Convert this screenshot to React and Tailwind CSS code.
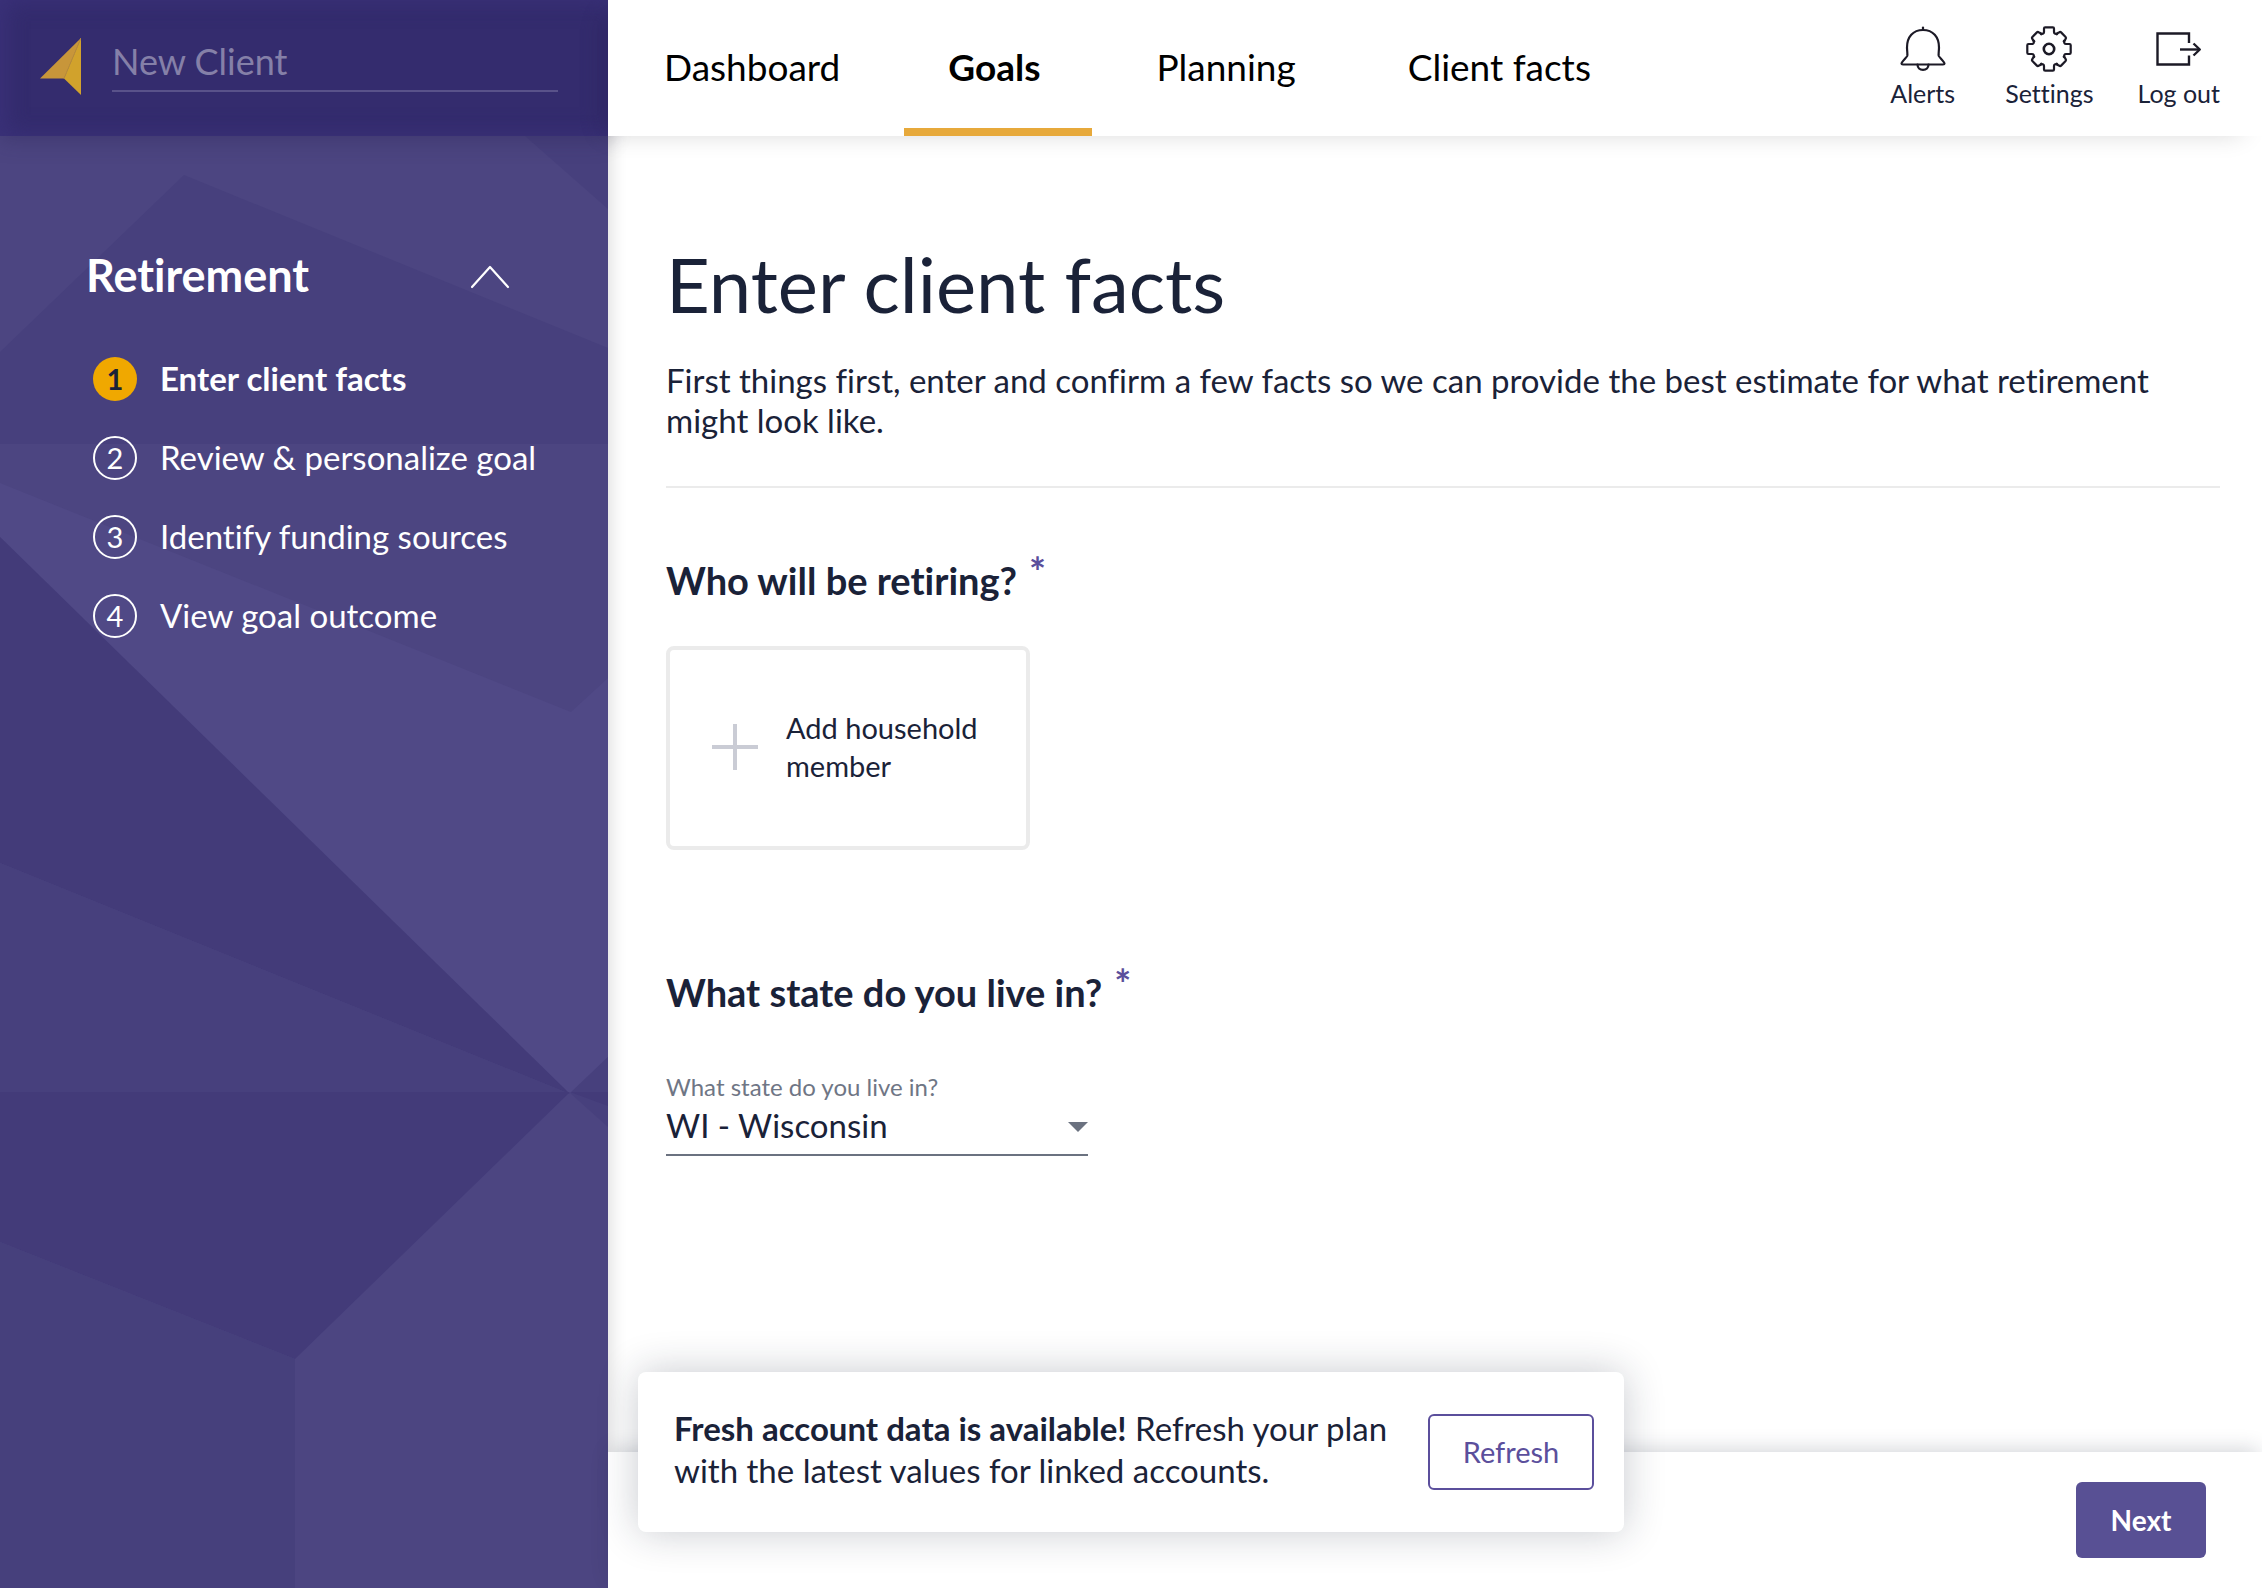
import React from "react";

const NAV = [
  { label: "Dashboard", active: false },
  { label: "Goals", active: true },
  { label: "Planning", active: false },
  { label: "Client facts", active: false },
];

const STEPS = [
  "Enter client facts",
  "Review & personalize goal",
  "Identify funding sources",
  "View goal outcome",
];

function Facets() {
  return (
    <svg
      className="absolute inset-0 h-full w-full"
      viewBox="0 0 608 1588"
      preserveAspectRatio="xMidYMin slice"
      aria-hidden="true"
    >
      <rect width="608" height="1588" fill="#4c4581" />
      <path d="M0 352 184 175 608 348V444H0Z" fill="#47407d" />
      <path d="M525 136 608 209V136Z" fill="#47407d" />
      <path d="M0 483 571 712 608 678V1057L570 1094 0 537Z" fill="#504986" />
      <path d="M0 537 570 1094 0 863Z" fill="#433b79" />
      <path d="M0 863 570 1094 0 1092Z" fill="#47407d" />
      <path d="M0 1092H570L295 1359 0 1242Z" fill="#433b79" />
      <path d="M0 1242 295 1359V1588H0Z" fill="#46407c" />
      <path d="M570 1093 608 1057V1127Z" fill="#47407d" />
      <path d="M570 1092H608V1106Z" fill="#433b79" />
    </svg>
  );
}

function Logo() {
  return (
    <svg className="h-[57px] w-[41px] shrink-0" viewBox="0 0 41 57" aria-hidden="true">
      <path d="M41 0 0 40.500H24Z" fill="#c8963a" />
      <path d="M41 0 24 40.500 41 57Z" fill="#d1a22c" />
      <path d="M41 0 24 40.500" stroke="#b98c3c" strokeWidth="1" />
    </svg>
  );
}

function BellIcon() {
  return (
    <svg className="h-12 w-12" viewBox="0 0 48 48" fill="none" stroke="#1c1a26" strokeWidth="2.2" strokeLinecap="round" strokeLinejoin="round" aria-hidden="true">
      <path d="M24 2.500V5" />
      <path d="M24 5C14 5 8 12 8 22.500c0 4 .8 6.500.2 8.500-.4 1.200-5.700 5.800-5.700 7.500 0 .6.500 1 1.500 1h40c1 0 1.500-.4 1.500-1 0-1.700-5.300-6.300-5.700-7.500-.6-2 .2-4.500.2-8.500C40 12 34 5 24 5Z" />
      <path d="M18.500 39.500c0 3.200 2.300 5.300 5.500 5.300s5.500-2.100 5.500-5.300" />
    </svg>
  );
}

function GearIcon() {
  const tooth = "M-8 -15.300Q-5 -14.800 -5 -17V-20.500Q-5 -21.700 -3.800 -21.700H3.800Q5 -21.700 5 -20.500V-17Q5 -14.800 8 -15.300";
  return (
    <svg className="h-12 w-12" viewBox="-24 -24 48 48" fill="none" stroke="#1c1a26" strokeWidth="2.200" strokeLinecap="round" strokeLinejoin="round" aria-hidden="true">
      <circle r="5.200" strokeWidth="2.600" />
      {[0, 90, 180, 270].map((a) => (
        <path key={a} d={tooth} transform={`rotate(${a})`} />
      ))}
      {[45, 135, 225, 315].map((a) => (
        <path
          key={a}
          d="M-5.200 -16.500Q-4.800 -14.800 -5 -17.500L-4.600 -18.800Q-4.400 -20.300 -3.200 -20.300H3.200Q4.400 -20.300 4.600 -18.800L5 -17.500Q4.800 -14.800 5.200 -16.500"
          transform={`rotate(${a})`}
        />
      ))}
    </svg>
  );
}

function LogoutIcon() {
  return (
    <svg className="h-12 w-12" viewBox="0 0 48 48" fill="none" stroke="#1c1a26" strokeWidth="2.400" aria-hidden="true">
      <path d="M34 18V8.500H2.500V39.500H34V30.500" />
      <path d="M25 24.500H44.500" />
      <path d="M38.500 18.500 44.800 24.500 38.500 30.500" strokeLinejoin="round" />
    </svg>
  );
}

function Sidebar() {
  return (
    <aside className="relative flex w-[608px] shrink-0 flex-col bg-[#4c4581] text-white">
      <Facets />
      <div className="relative flex h-[136px] items-start gap-[31px] bg-[#342c6e] pt-8 pr-[50px] pl-10 shadow-[inset_10px_0_24px_-8px_#3a3178,inset_0_0_24px_#3a3178,0_4px_20px_rgba(40,34,80,0.35)]">
        <div className="pt-1.5">
          <Logo />
        </div>
        <input
          aria-label="Client name"
          placeholder="New Client"
          className="h-[60px] min-w-0 flex-1 border-b-2 border-[#59528a] bg-transparent text-4xl placeholder-[#8580a8] outline-none"
        />
      </div>
      <section className="relative px-[86px] pt-[111px]">
        <button type="button" className="flex w-full items-center justify-between text-left">
          <h2 className="text-[45px] leading-[56px] font-bold">Retirement</h2>
          <svg className="mt-1 mr-3 h-6 w-10" viewBox="0 0 40 24" fill="none" stroke="white" strokeWidth="2.200" strokeLinecap="round" strokeLinejoin="round" aria-hidden="true">
            <path d="M2 22 20 2 38 22" />
          </svg>
        </button>
      </section>
      <ol className="relative flex flex-col gap-[35px] pt-[54px] pr-8 pl-[93px]">
        {STEPS.map((s, i) => (
          <li key={s}>
            <a href="#" className="flex items-center gap-[23px] whitespace-nowrap">
              <span
                className={
                  i === 0
                    ? "flex h-11 w-11 items-center justify-center rounded-full bg-[#f0a800] text-[29px] font-bold text-[#1a2238]"
                    : "flex h-11 w-11 items-center justify-center rounded-full border-2 border-white text-[29px]"
                }
              >
                {i + 1}
              </span>
              <span className={i === 0 ? "pb-0.5 text-[33px] leading-10 font-bold" : "pb-0.5 text-[33px] leading-10"}>{s}</span>
            </a>
          </li>
        ))}
      </ol>
    </aside>
  );
}

function Header() {
  const tools = [
    { label: "Alerts", Icon: BellIcon },
    { label: "Settings", Icon: GearIcon },
    { label: "Log out", Icon: LogoutIcon },
  ];
  return (
    <header className="relative flex h-[136px] justify-between bg-white pr-[42px] pl-2 shadow-[-12px_6px_24px_-8px_rgba(0,0,0,0.16)]">
      <nav className="flex gap-4">
        {NAV.map((n) => (
          <a
            key={n.label}
            href="#"
            className={
              n.active
                ? "flex items-center border-t-6 border-b-8 border-t-transparent border-b-[#e7a93b] pr-[52px] pl-11 text-[37px] font-bold text-black"
                : "flex items-center border-t-6 border-b-8 border-transparent px-12 text-[37px] text-black"
            }
          >
            {n.label}
          </a>
        ))}
      </nav>
      <div className="flex items-start gap-11 pt-[25px]">
        {tools.map(({ label, Icon }) => (
          <button key={label} type="button" className="flex flex-col items-center gap-1 text-[25px] leading-8 text-[#1a2238] first:mr-1.5">
            <Icon />
            {label}
          </button>
        ))}
      </div>
    </header>
  );
}

function Question({ children }) {
  return (
    <h2 className="flex items-start gap-3 text-[38px] leading-[44px] font-bold">
      {children}
      <span className="text-[40px] leading-7 text-[#5b4f9c]">*</span>
    </h2>
  );
}

export default function App() {
  return (
    <div className="flex min-h-screen bg-white font-[Lato,sans-serif] text-[#1a2238] [font-variant-ligatures:none]">
      <Sidebar />
      <div className="relative flex min-w-0 flex-1 flex-col">
        <Header />
        <main className="flex-1 pt-[108px] pr-[42px] pb-16 pl-[58px] shadow-[inset_20px_0_16px_-16px_rgba(0,0,0,0.12)]">
          <h1 className="text-[76px] leading-[80px]">Enter client facts</h1>
          <p className="mt-9 text-[33px] leading-10">
            First things first, enter and confirm a few facts so we can provide the best estimate for what retirement might look like.
          </p>
          <hr className="mt-[46px] border-t-2 border-[#ebebeb]" />

          <section className="mt-[70px]">
            <Question>Who will be retiring?</Question>
            <button
              type="button"
              className="mt-11 flex h-[204px] w-[364px] items-center gap-7 rounded-lg border-4 border-[#ebebeb] bg-white px-[42px] pb-0.5 text-left text-[29px] leading-[38px]"
            >
              <svg className="h-[46px] w-[46px] shrink-0" viewBox="0 0 46 46" stroke="#caccd5" strokeWidth="4" aria-hidden="true">
                <path d="M23 0V46M0 23H46" />
              </svg>
              Add household member
            </button>
          </section>

          <section className="mt-[120px]">
            <Question>What state do you live in?</Question>
            <div className="relative mt-[57px] w-[422px]">
              <label htmlFor="state" className="block text-2xl leading-8 text-[#6f7685]">
                What state do you live in?
              </label>
              <select
                id="state"
                defaultValue="WI"
                className="block h-[53px] w-full appearance-none border-b-2 border-[#6b7280] bg-transparent pb-2 text-[33px] leading-10 outline-none"
              >
                <option value="WI">WI - Wisconsin</option>
              </select>
              <svg className="pointer-events-none absolute right-0 bottom-6 h-[10px] w-5" viewBox="0 0 20 10" fill="#6b7280" aria-hidden="true">
                <path d="M0 0H20L10 10Z" />
              </svg>
            </div>
          </section>
        </main>

        <footer className="relative flex h-[136px] items-center justify-end bg-white pr-14 shadow-[0_-6px_20px_-4px_rgba(26,34,56,0.2)]">
          <button type="button" className="h-[76px] w-[130px] rounded-md bg-[#585094] text-[28px] font-bold text-white">
            Next
          </button>
        </footer>

        <div
          role="status"
          className="absolute bottom-14 left-[30px] flex h-40 w-[986px] items-center justify-between rounded-lg bg-white pr-[30px] pl-9 shadow-[0_0_40px_rgba(26,34,56,0.24)]"
        >
          <p className="w-[740px] pb-1.5 text-[33px] leading-[42px]">
            <strong>Fresh account data is available!</strong> Refresh your plan with the latest values for linked accounts.
          </p>
          <button type="button" className="h-[76px] w-[166px] rounded-md border-2 border-[#5b4f9c] text-[29px] text-[#5b4f9c]">
            Refresh
          </button>
        </div>
      </div>
    </div>
  );
}
